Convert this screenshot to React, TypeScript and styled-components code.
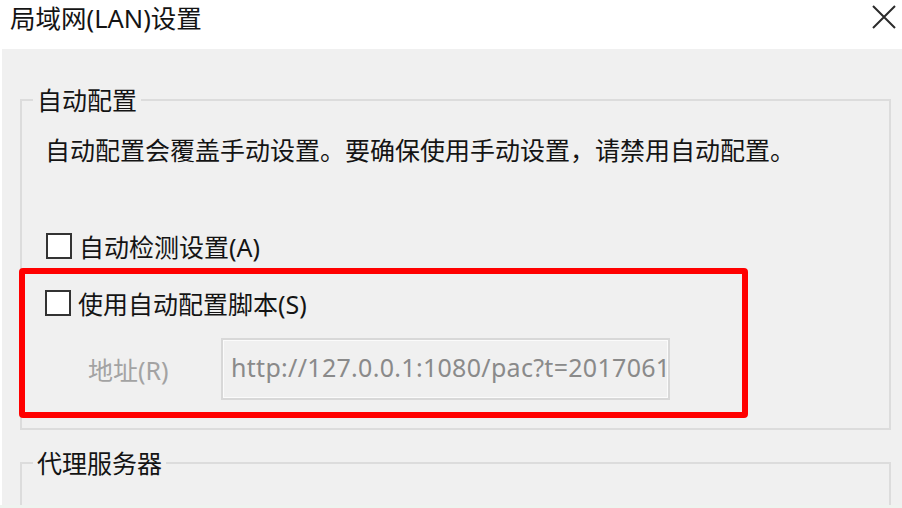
import styled, { createGlobalStyle } from "styled-components";

const GlobalStyle = createGlobalStyle`
    html, body {
        margin: 0;
        padding: 0;
        background: #eef3ef;
        overflow: hidden;
    }
`;

export default function App() {
    return (
        <>
            <GlobalStyle />
            <Window>
                <TitleBar>
                    <Title>局域网(LAN)设置</Title>
                    <CloseButton aria-label="关闭">
                        <svg width="24" height="24" viewBox="0 0 24 24">
                            <path d="M1 1 L23 23 M23 1 L1 23" stroke="#2b2b2b" strokeWidth="2" fill="none" />
                        </svg>
                    </CloseButton>
                </TitleBar>
                <Body>
                    <GroupBox>
                        <Legend>自动配置</Legend>
                        <Description>自动配置会覆盖手动设置。要确保使用手动设置，请禁用自动配置。</Description>
                        <CheckRow $indent={24} $top={66}>
                            <Check type="checkbox" />
                            <span>自动检测设置(A)</span>
                        </CheckRow>
                        <Highlight>
                            <CheckRow $indent={20} $top={0}>
                                <Check type="checkbox" />
                                <span>使用自动配置脚本(S)</span>
                            </CheckRow>
                            <AddressRow>
                                <AddressLabel>地址(R)</AddressLabel>
                                <AddressInput disabled value="http://127.0.0.1:1080/pac?t=2017061305" readOnly />
                            </AddressRow>
                        </Highlight>
                    </GroupBox>
                    <ProxyGroup>
                        <Legend>代理服务器</Legend>
                    </ProxyGroup>
                </Body>
            </Window>
        </>
    )
}


const Window = styled.div`
    width: 902px;
    height: 505px;
    background: #ffffff;
    display: flex;
    flex-direction: column;
    font-family: "Noto Sans", "Noto Sans CJK SC", sans-serif;
    color: #141414;
`;

const TitleBar = styled.div`
    height: 49px;
    flex-shrink: 0;
    display: flex;
    justify-content: space-between;
    align-items: flex-start;
    padding: 2px 5px 0 10px;
    box-sizing: border-box;
`;

const Title = styled.span`
    font-size: 25.5px;
    line-height: 32px;
`;

const CloseButton = styled.button`
    border: none;
    background: none;
    padding: 0;
    margin-top: 2px;
    width: 26px;
    height: 26px;
    display: flex;
    align-items: center;
    justify-content: center;
`;

const Body = styled.div`
    flex: 1;
    margin-left: 2px;
    background: #f0f0f0;
    padding: 36px 11px 0 18px;
    overflow: hidden;
    display: flex;
    flex-direction: column;
`;

const GroupBox = styled.fieldset`
    margin: 0;
    padding: 0 0 10px 0;
    min-width: 0;
    border: 2px solid #dcdcdc;
`;

const ProxyGroup = styled(GroupBox)`
    margin-top: 18px;
    flex: 1;
    border-bottom: none;
`;

const Legend = styled.legend`
    margin-left: 11px;
    padding: 0 4px;
    font-size: 25px;
    line-height: 30px;
`;

const Description = styled.div`
    margin-top: 20px;
    padding-left: 23px;
    font-size: 25px;
    line-height: 30px;
`;

const CheckRow = styled.label<{ $indent: number; $top: number }>`
    display: flex;
    align-items: center;
    height: 30px;
    margin-top: ${(p) => p.$top}px;
    padding-left: ${(p) => p.$indent}px;
    font-size: 25px;
    gap: 7px;
`;

const Check = styled.input`
    appearance: none;
    margin: 0;
    width: 26px;
    height: 26px;
    border: 2px solid #333333;
    background: #ffffff;
    box-sizing: border-box;
`;

/* red annotation frame round the script option */
const Highlight = styled.div`
    margin: 7px 0 0 -3px;
    width: 729px;
    box-sizing: border-box;
    border: 6px solid #ff0000;
    border-radius: 4px;
    padding: 14px 0 12px 0;
`;

const AddressRow = styled.div`
    display: flex;
    align-items: center;
    margin-top: 20px;
`;

const AddressLabel = styled.span`
    width: 133px;
    padding-left: 63px;
    font-size: 25px;
    color: #a3a3a3;
`;

const AddressInput = styled.input`
    width: 449px;
    height: 62px;
    box-sizing: border-box;
    margin: 0;
    padding: 0 0 4px 8px;
    border: 2px solid #d8d8d8;
    box-shadow: inset 0 0 0 1px #fbfbfb;
    background: #f0f0f0;
    font-family: "Noto Sans", sans-serif;
    font-size: 25px;
    letter-spacing: 0.3px;
    color: #8a8a8a;
    -webkit-text-fill-color: #8a8a8a;
    opacity: 1;
    outline: none;
`;
